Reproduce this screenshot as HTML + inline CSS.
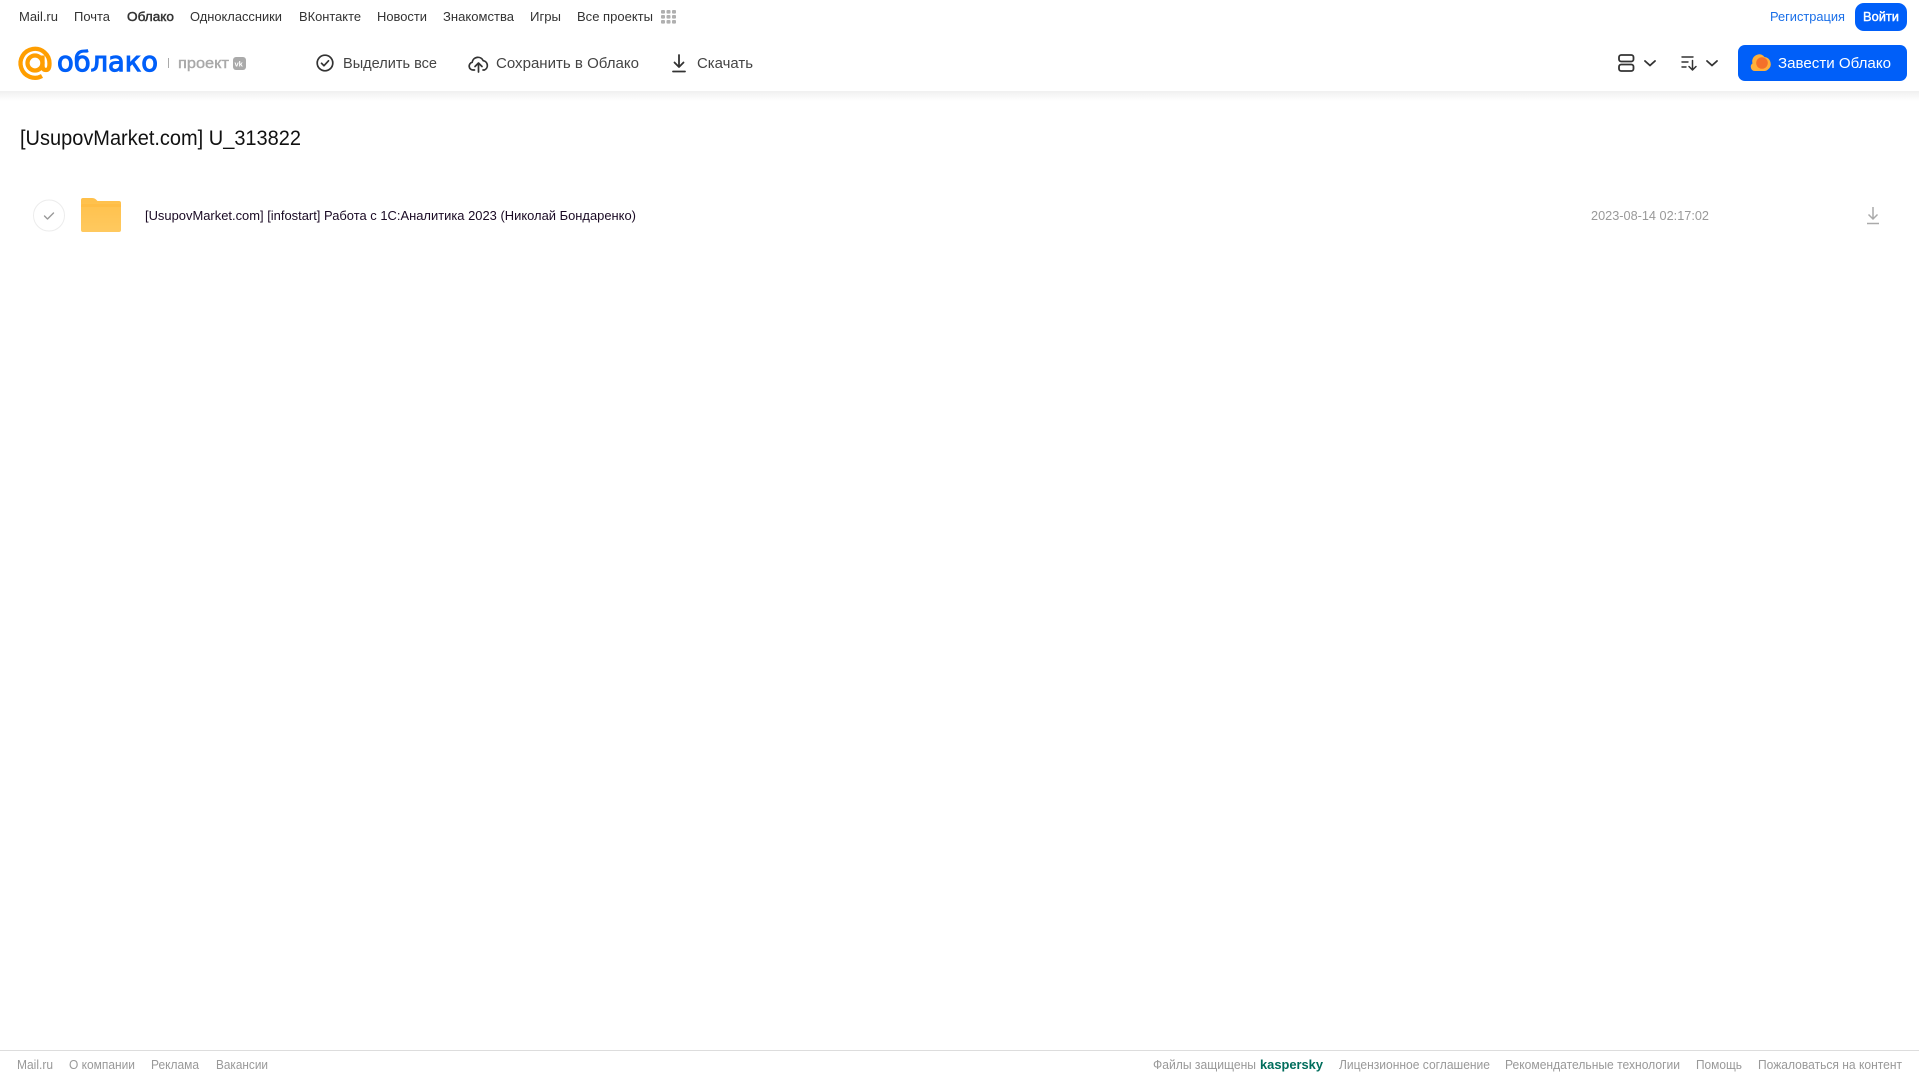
<!DOCTYPE html>
<html lang="ru">
<head>
<meta charset="utf-8">
<title>Облако</title>
<style>
html,body{margin:0;padding:0;background:#fff;width:1919px;height:1079px;overflow:hidden}
svg{display:block}
text{font-family:"Liberation Sans",sans-serif;white-space:pre}
.n{font-size:13px;fill:#333}
.t{font-size:15px;fill:#444}
.f{font-size:12.5px;fill:#999}
</style>
</head>
<body>
<svg width="1919" height="1079" viewBox="0 0 1919 1079" xmlns="http://www.w3.org/2000/svg">
<defs>
<linearGradient id="sh" x1="0" y1="0" x2="0" y2="1"><stop offset="0" stop-color="#f0f0f0"/><stop offset="1" stop-color="#fff"/></linearGradient>
<linearGradient id="fo" x1="0" y1="0" x2="0" y2="1"><stop offset="0" stop-color="#ffc04a"/><stop offset="1" stop-color="#ffc95f"/></linearGradient>
</defs>
<rect x="0" y="91" width="1919" height="10" fill="url(#sh)"/>

<!-- top nav -->
<text class="n" x="19" y="21" textLength="39" lengthAdjust="spacingAndGlyphs">Mail.ru</text>
<text class="n" x="74" y="21" textLength="36" lengthAdjust="spacingAndGlyphs">Почта</text>
<text class="n" x="127" y="21" textLength="47" lengthAdjust="spacingAndGlyphs" stroke="#333" stroke-width=".45">Облако</text>
<text class="n" x="190" y="21" textLength="92" lengthAdjust="spacingAndGlyphs">Одноклассники</text>
<text class="n" x="299" y="21" textLength="62" lengthAdjust="spacingAndGlyphs">ВКонтакте</text>
<text class="n" x="377" y="21" textLength="50" lengthAdjust="spacingAndGlyphs">Новости</text>
<text class="n" x="443" y="21" textLength="71" lengthAdjust="spacingAndGlyphs">Знакомства</text>
<text class="n" x="530" y="21" textLength="31" lengthAdjust="spacingAndGlyphs">Игры</text>
<text class="n" x="577" y="21" textLength="76" lengthAdjust="spacingAndGlyphs">Все проекты</text>
<g fill="#b0b0b0">
<rect x="661" y="10" width="4" height="3.6" rx="1"/><rect x="666.500" y="10" width="4" height="3.6" rx="1"/><rect x="672" y="10" width="4" height="3.6" rx="1"/>
<rect x="661" y="15" width="4" height="3.6" rx="1"/><rect x="666.500" y="15" width="4" height="3.6" rx="1"/><rect x="672" y="15" width="4" height="3.6" rx="1"/>
<rect x="661" y="20" width="4" height="3.6" rx="1"/><rect x="666.500" y="20" width="4" height="3.6" rx="1"/><rect x="672" y="20" width="4" height="3.6" rx="1"/>
</g>
<text x="1770" y="21" font-size="13" fill="#1a6fe8" textLength="75" lengthAdjust="spacingAndGlyphs">Регистрация</text>
<rect x="1855" y="3" width="52" height="28" rx="9" fill="#005ff9"/>
<text x="1863" y="21" font-size="13" fill="#fff" stroke="#fff" stroke-width=".4" textLength="36" lengthAdjust="spacingAndGlyphs">Войти</text>

<!-- logo -->
<g fill="none" stroke="#ff9e00" stroke-width="4.300">
<circle cx="35" cy="63" r="7.500"/>
<path d="M42.500 55.500V65.500Q42.500 70 46 70Q49.500 70 49.500 63.500A14.500 14.500 0 1 0 42 76"/>
</g>
<text x="57" y="71" font-size="28" fill="#005ff9" stroke="#005ff9" stroke-width="1.100" style="font-family:'DejaVu Sans',sans-serif" textLength="101" lengthAdjust="spacingAndGlyphs">облако</text>
<rect x="168" y="58" width="1" height="10" fill="#aaa"/>
<text x="178" y="68" font-size="15" fill="#a9a9a9" stroke="#a9a9a9" stroke-width=".4" textLength="51" lengthAdjust="spacingAndGlyphs">проект</text>
<rect x="233" y="57" width="13" height="13" rx="3" fill="#aaa"/>
<text x="234.500" y="66.500" font-size="7.500" font-weight="700" fill="#fff">vk</text>

<!-- toolbar -->
<g fill="none" stroke="#333" stroke-width="1.700" stroke-linecap="round" stroke-linejoin="round">
<circle cx="325" cy="63" r="7.800"/>
<path d="M321.500 63.300l2.500 2.400 4.500-4.900"/>
<path d="M474.500 70h-1.500a3.900 3.900 0 0 1-.8-7.700 5.800 5.800 0 0 1 11-1.600 4.900 4.900 0 0 1 1.300 9.300h-1.500"/>
<path d="M478.500 72v-9M475 66.500l3.500-3.500 3.500 3.500"/>
<path d="M679 55v12M674.500 62.500l4.500 4.500 4.500-4.500M673 71.500h12" stroke-width="1.800"/>
</g>
<text class="t" x="343" y="68" textLength="94" lengthAdjust="spacingAndGlyphs">Выделить все</text>
<text class="t" x="496" y="68" textLength="143" lengthAdjust="spacingAndGlyphs">Сохранить в Облако</text>
<text class="t" x="697" y="68" textLength="56" lengthAdjust="spacingAndGlyphs">Скачать</text>

<!-- right controls -->
<g fill="none" stroke="#333" stroke-width="1.800" stroke-linecap="round" stroke-linejoin="round">
<rect x="1619" y="55" width="14.500" height="6.500" rx="2.200"/>
<rect x="1619" y="64.500" width="14.500" height="6.500" rx="2.200"/>
<path d="M1645 61l5 4.500 5-4.500"/>
<path d="M1707 61l5 4.500 5-4.500"/>
<path d="M1682 57h11M1682 62h6M1682 67h4" stroke-width="1.400"/>
<path d="M1692.500 60.500v9M1689 66.500l3.500 3.500 3.500-3.500" stroke-width="1.500"/>
</g>
<rect x="1738" y="45" width="169" height="36" rx="7" fill="#005ff9"/>
<path d="M1755 71a4.200 4.200 0 0 1-2.500-7.600 7 7 0 0 1 5-8.800 6 6 0 0 1 7 2.400 7 7 0 0 1 3.500 12.500 5 5 0 0 1-3 1.500z" fill="#ffb03a"/>
<circle cx="1762" cy="63" r="5.800" fill="#f4702a"/>
<text x="1778" y="68" font-size="15" fill="#fff" textLength="113" lengthAdjust="spacingAndGlyphs">Завести Облако</text>

<!-- title -->
<text x="20" y="145" font-size="21.500" fill="#111" textLength="281" lengthAdjust="spacingAndGlyphs">[UsupovMarket.com] U_313822</text>

<!-- row -->
<circle cx="49" cy="215.500" r="15.500" fill="#fff" stroke="#ececec" stroke-width="1"/>
<path d="M44.500 216l3 3 6-6" fill="none" stroke="#999" stroke-width="1.400" stroke-linecap="round" stroke-linejoin="round"/>
<path d="M83 198h9q2.500 0 4 1.500l1.500 1.500H119q2 0 2 2v27q0 2-2 2H83q-2 0-2-2V200q0-2 2-2z" fill="url(#fo)"/>
<path d="M81 206q0-2 2-2h36q2 0 2 2v1H81z" fill="#ffb93f" opacity=".6"/>
<text x="145" y="220" font-size="12.800" fill="#1a0a24" textLength="491" lengthAdjust="spacingAndGlyphs">[UsupovMarket.com] [infostart] Работа с 1С:Аналитика 2023 (Николай Бондаренко)</text>
<text x="1591" y="220" font-size="12.500" fill="#999" textLength="118" lengthAdjust="spacingAndGlyphs">2023-08-14 02:17:02</text>
<path d="M1873 207v12M1868.500 214.500l4.500 4.500 4.500-4.500M1867 223.500h12" fill="none" stroke="#aaa" stroke-width="1.500"/>

<!-- footer -->
<rect x="0" y="1050" width="1919" height="1" fill="#ddd"/>
<text class="f" x="17" y="1069" textLength="36" lengthAdjust="spacingAndGlyphs">Mail.ru</text>
<text class="f" x="69" y="1069" textLength="66" lengthAdjust="spacingAndGlyphs">О компании</text>
<text class="f" x="151" y="1069" textLength="48" lengthAdjust="spacingAndGlyphs">Реклама</text>
<text class="f" x="216" y="1069" textLength="52" lengthAdjust="spacingAndGlyphs">Вакансии</text>
<text class="f" x="1153" y="1069" textLength="103" lengthAdjust="spacingAndGlyphs">Файлы защищены</text>
<text x="1260" y="1069" font-size="13" font-weight="700" fill="#006d5c" textLength="63" lengthAdjust="spacingAndGlyphs">kaspersky</text>
<text class="f" x="1339" y="1069" textLength="151" lengthAdjust="spacingAndGlyphs">Лицензионное соглашение</text>
<text class="f" x="1505" y="1069" textLength="175" lengthAdjust="spacingAndGlyphs">Рекомендательные технологии</text>
<text class="f" x="1696" y="1069" textLength="46" lengthAdjust="spacingAndGlyphs">Помощь</text>
<text class="f" x="1758" y="1069" textLength="144" lengthAdjust="spacingAndGlyphs">Пожаловаться на контент</text>
</svg>
</body>
</html>
